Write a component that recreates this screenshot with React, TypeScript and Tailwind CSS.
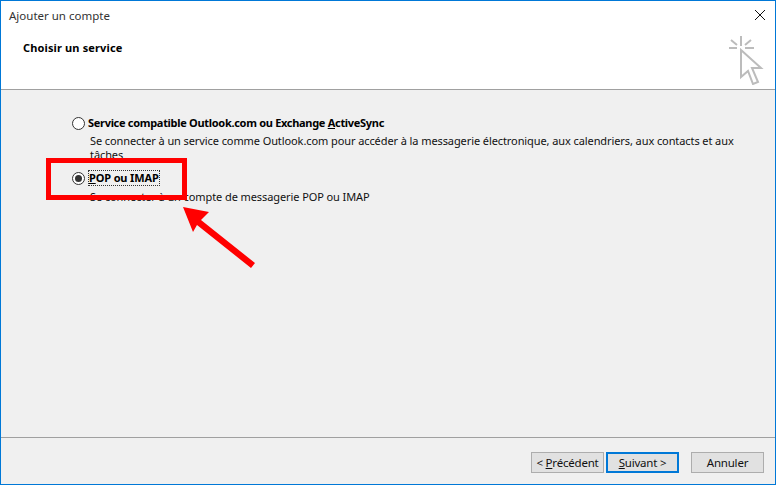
const font = "[font-family:'Noto_Sans',sans-serif]";

function Radio({ checked }: { checked?: boolean }) {
  return (
    <span className="flex h-[13px] w-[13px] shrink-0 items-center justify-center rounded-full border border-[#333] bg-white">
      {checked && <span className="h-[7px] w-[7px] rounded-full bg-[#333]" />}
    </span>
  );
}

function WizardButton({ children, primary }: { children: React.ReactNode; primary?: boolean }) {
  return (
    <button
      className={
        primary
          ? 'h-[21px] w-[73px] border-2 border-[#0078d7] bg-[#e1e1e1] text-[11.5px] leading-[14px] tracking-[-0.2px] text-[#111]'
          : 'h-[21px] w-[73px] border border-[#adadad] bg-[#e1e1e1] text-[11.5px] leading-[14px] tracking-[-0.2px] text-[#111]'
      }
    >
      {children}
    </button>
  );
}

export default function App() {
  return (
    <div className={`relative flex h-[485px] w-[776px] flex-col overflow-hidden border border-[#0078d7] bg-[#f0f0f0] text-[#111] ${font}`}>
      {/* Header */}
      <div className="flex h-[89px] shrink-0 justify-between border-b border-[#a0a0a0] bg-white">
        <div className="pl-2 pt-[6px]">
          <div className="text-[11.5px] leading-[18px] text-[#333]">Ajouter un compte</div>
          <div className="pl-[14px] pt-[15px] text-[11px] font-bold leading-[16px] tracking-[0.14px] text-black">Choisir un service</div>
        </div>
        <div className="flex flex-col items-end pr-[10px] pt-[8px]">
          <svg width="12" height="12" viewBox="0 0 12 12" className="mr-[-1px]">
            <path d="M1 1 L11 11 M11 1 L1 11" stroke="#111" strokeWidth="1" fill="none" />
          </svg>
          <svg width="36" height="51" viewBox="0 0 36 51" className="mr-[1px] mt-[13px]">
            <g stroke="#bcbcbc" strokeWidth="2" fill="none">
              <path d="M13 2 V12 M3 6 L9 11 M23 6 L17 11 M1 14 H9 M17 14 H26" />
              <path d="M13 16 L33 34 L24 34 L30 48 L25 50 L20 37 L13 43 Z" fill="#fff" />
            </g>
          </svg>
        </div>
      </div>

      {/* Options */}
      <div className="flex-1 pl-[71px] pr-[30px] pt-[25px]">
        <div className="flex h-[16px] items-center gap-[3px]">
          <Radio />
          <span className="text-[11px] font-bold leading-[16px] tracking-[-0.3px] text-black">
            Service compatible Outlook.com ou Exchange <u>A</u>ctiveSync
          </span>
        </div>
        <p className="mt-[3px] pl-[18px] text-[11px] leading-[14px] tracking-[-0.09px] text-[#111]">
          Se connecter à un service comme Outlook.com pour accéder à la messagerie électronique, aux calendriers, aux contacts et aux tâches
        </p>
        <div className="mt-[8px] flex h-[16px] items-center gap-[3px]">
          <Radio checked />
          <span className="border border-dotted border-[#333] text-[11px] font-bold leading-[14px] tracking-[-0.15px] text-black">
            <u>P</u>OP ou IMAP
          </span>
        </div>
        <p className="mt-[4px] pl-[18px] text-[11px] leading-[14px] tracking-[-0.09px] text-[#111]">
          Se connecter à un compte de messagerie POP ou IMAP
        </p>
      </div>

      {/* Footer */}
      <div className="flex h-[47px] shrink-0 items-start justify-end border-t border-[#a0a0a0] pr-[11px] pt-[14px]">
        <div className="flex gap-[2px]">
          <WizardButton>
            &lt; <u>P</u>récédent
          </WizardButton>
          <WizardButton primary>
            <u>S</u>uivant &gt;
          </WizardButton>
        </div>
        <div className="ml-[12px] flex">
          <WizardButton>Annuler</WizardButton>
        </div>
      </div>

      {/* Red annotation laid over the dialog */}
      <div className="absolute left-[45px] top-[157px] h-[42px] w-[141px] border-[5px] border-[#f00]" />
      <svg width="776" height="485" viewBox="0 0 776 485" className="pointer-events-none absolute left-[-1px] top-[-1px]">
        <path d="M183 207 L209 212 L201 220 L255 263 L251 268 L197 225 L193 232 Z" fill="#f00" />
      </svg>
    </div>
  );
}
